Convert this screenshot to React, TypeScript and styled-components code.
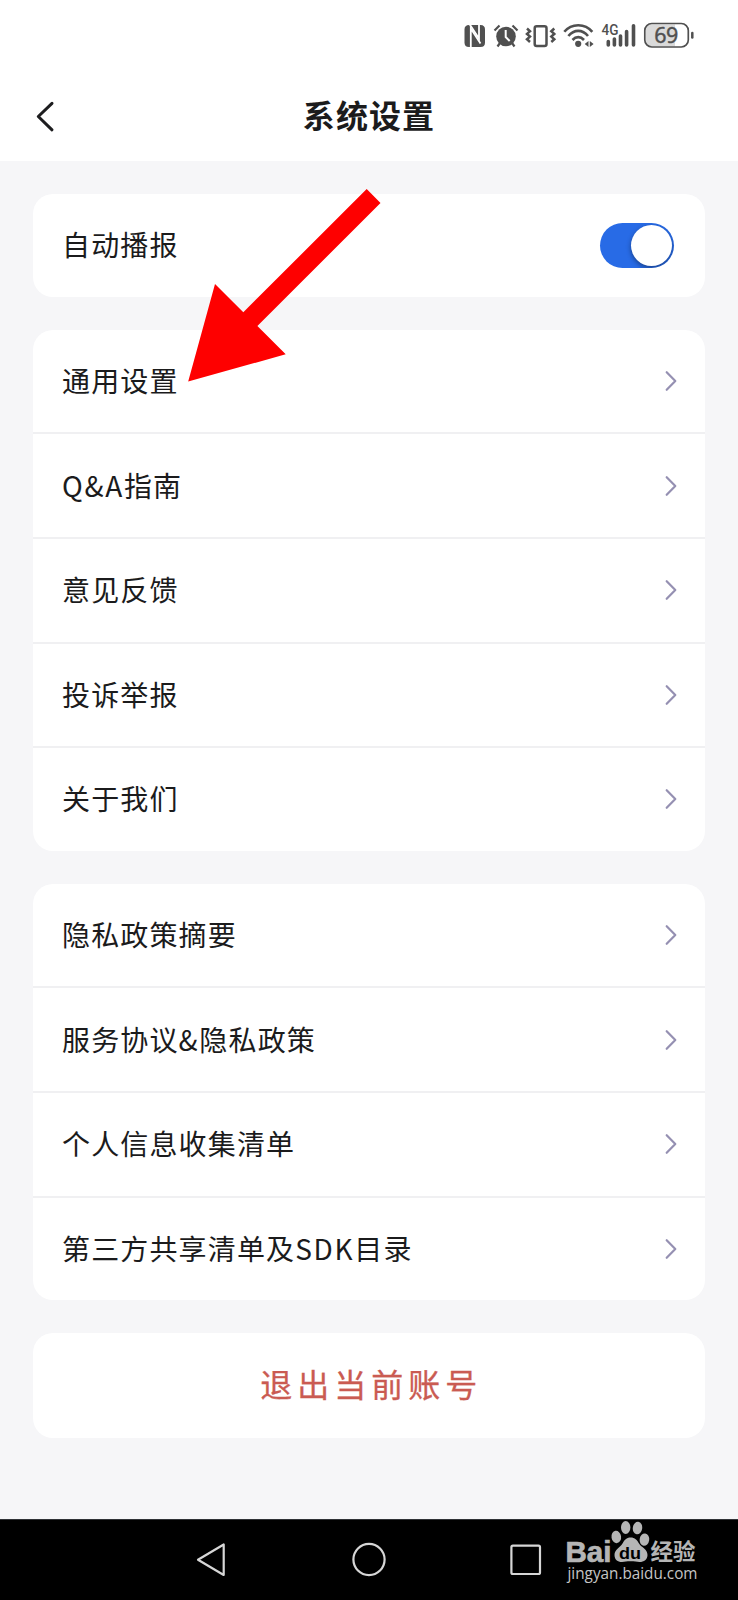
import React from "react";
import styled, { createGlobalStyle } from "styled-components";

const GlobalStyle = createGlobalStyle`
  * { box-sizing: border-box; }
  html, body { margin: 0; padding: 0; background: #f6f6f8; }
`;

const Screen = styled.div`
  position: relative;
  display: flex;
  flex-direction: column;
  width: 738px;
  height: 1600px;
  overflow: hidden;
  background: #f6f6f8;
  color: #1b1b1c;
  font-family: "Noto Sans CJK SC", "Noto Sans", sans-serif;
`;

const Top = styled.header`
  height: 161px;
  flex: none;
  display: flex;
  flex-direction: column;
  background: #fff;
`;

const StatusBar = styled.div`
  height: 72px;
  display: flex;
  justify-content: flex-end;
  padding: 20px 44px 0 0;
`;

const TitleBar = styled.div`
  height: 89px;
  display: grid;
  grid-template-columns: 80px 1fr 80px;
`;

const BackButton = styled.button`
  display: flex;
  align-items: flex-start;
  padding: 27px 0 0 34px;
  border: 0;
  background: none;
`;

const Title = styled.h1`
  margin: 0;
  padding-top: 18px;
  text-align: center;
  font-size: 32px;
  line-height: 48px;
  font-weight: 700;
  letter-spacing: 1.1px;
`;

const Content = styled.main`
  flex: 1;
  display: flex;
  flex-direction: column;
  gap: 32.8px;
  padding: 33px 33px 0 32.5px;
`;

const Card = styled.section`
  background: #fff;
  border-radius: 20px;
`;

const Row = styled.div`
  height: 102.8px;
  display: flex;
  align-items: center;
  justify-content: space-between;
  padding: 0 27.5px 0 29.5px;

  & + & { border-top: 2px solid #f0f0f2; height: 104.6px; }
`;

const Label = styled.span`
  font-size: 28px;
  line-height: 40px;
  letter-spacing: 1.15px;
  white-space: nowrap;
  padding-bottom: 2px;
`;

const Latin = styled.span`
  letter-spacing: 1.7px;
`;

const Switch = styled.span`
  width: 74px;
  height: 45px;
  margin-right: 4px;
  padding: 2px;
  border-radius: 23px;
  background: #286be6;
  display: flex;
  justify-content: flex-end;
  overflow: hidden;
`;

const Knob = styled.span`
  width: 41px;
  height: 41px;
  border-radius: 50%;
  background: #fff;
  box-shadow: 0 2px 5px rgba(0, 0, 0, 0.4);
`;

const Logout = styled.button`
  height: 105px;
  padding: 0 0 5px 5px;
  border: 0;
  border-radius: 20px;
  background: #fff;
  color: #ca5b52;
  font: inherit;
  font-size: 32px;
  letter-spacing: 5px;
  -webkit-text-stroke: 0.3px #ca5b52;
`;

const NavBar = styled.nav`
  position: relative;
  height: 81px;
  flex: none;
  background: #000;
  border-top: 1px solid #303236;
`;

const NavKeys = styled.div`
  display: flex;
  justify-content: space-between;
  padding: 22px 195px 0 195px;
`;

const Watermark = styled.svg`
  position: absolute;
  left: 560px;
  top: 0;
`;

const Pointer = styled.svg`
  position: absolute;
  left: 180px;
  top: 180px;
`;

const StatusIcons = () => (
  <svg width="234" height="32" viewBox="460 20 234 32" fill="#505050">
    <path d="M469 25h11.500q4.500 0 4.500 4.500v13q0 4.500-4.500 4.500H469q-4.500 0-4.500-4.500v-13q0-4.500 4.500-4.500z" />
    <g fill="none" stroke="#fff" strokeWidth="1.800">
      <path d="M470.800 47.500V28.500L480.500 43.500" />
      <path d="M469.800 24.500L479 38.500V25" />
    </g>
    <g>
      <circle cx="506" cy="36.500" r="9.800" />
      <path d="M494.500 30.500l5-5M517.500 30.500l-5-5M500 43l-2.500 3.500M512 43l2.500 3.500" stroke="#505050" strokeWidth="2.200" fill="none" />
      <path d="M505.700 30v7l4 4" fill="none" stroke="#fff" strokeWidth="2" />
    </g>
    <g fill="none" stroke="#505050" strokeWidth="2.500">
      <rect x="534.700" y="26.200" width="11.800" height="19.800" rx="2" />
      <path d="M527 28.500l3 2.700-3 2.700 3 2.700-3 2.700 3 2.700" />
      <path d="M554.300 28.500l-3 2.700 3 2.700-3 2.700 3 2.700-3 2.700" />
    </g>
    <g fill="none" stroke="#505050" strokeWidth="2.600">
      <path d="M564.300 31.800C571.500 23 585 23 592.300 31.800" />
      <path d="M568.400 36C574 29.200 582.500 29.200 588 36" />
      <path d="M572.500 40C576 36.200 580.500 36.200 584 40" />
    </g>
    <circle cx="578.200" cy="43.800" r="3.100" />
    <path d="M588.500 41v6l-3.800-3zM589.800 41v6l3.800-3z" />
    <text x="601.500" y="34.500" fontFamily="Roboto, sans-serif" fontWeight="500" fontSize="15" textLength="17" lengthAdjust="spacingAndGlyphs">4G</text>
    <g stroke="#505050" strokeWidth="3.600" strokeLinecap="round">
      <path d="M608.300 41.500v3.500M614.400 39v6M620.500 36v9M626.600 31.500v13.500M633.500 25.800v19.200" />
    </g>
    <path d="M650 24.500h25v22h-25q-4-1-4-5.500V30q0-4 4-5.500z" fill="#dadada" />
    <rect x="644.800" y="23.500" width="43.500" height="23.500" rx="7" fill="none" stroke="#505050" strokeWidth="1.700" />
    <path d="M692.300 33v4.500" stroke="#505050" strokeWidth="2.500" strokeLinecap="round" />
    <text x="654.200" y="43" fontFamily='"Noto Sans", sans-serif' fontWeight="400" fontSize="21.500" textLength="24" stroke="#505050" strokeWidth=".4">69</text>
  </svg>
);

const BackIcon = () => (
  <svg width="24" height="36" viewBox="34 99 24 36">
    <path d="M52 103.300L38.300 116.500L52 129.800" fill="none" stroke="#1d1d1f" strokeWidth="3" strokeLinecap="round" strokeLinejoin="round" />
  </svg>
);

const Chevron = () => (
  <svg width="14" height="24" viewBox="0 0 14 24" fill="none" stroke="#9590b2" strokeWidth="2.200" strokeLinecap="round" strokeLinejoin="round">
    <path d="M2.700 3.200L11.300 12L2.700 20.800" />
  </svg>
);

const BaiduMark = () => (
  <Watermark width="144" height="80" viewBox="560 1520 144 80" fill="#b5b5b5">
    <text x="565.500" y="1561.500" fontFamily='"Liberation Sans", sans-serif' fontWeight="700" fontSize="29" textLength="46" lengthAdjust="spacingAndGlyphs" stroke="#b5b5b5" strokeWidth=".7">Bai</text>
    <ellipse cx="616.300" cy="1537" rx="4.800" ry="6.200" transform="rotate(-8 616 1537)" />
    <ellipse cx="625.700" cy="1527.500" rx="4.700" ry="6.500" />
    <ellipse cx="637.500" cy="1528" rx="4.700" ry="6.300" transform="rotate(8 637 1528)" />
    <ellipse cx="644.500" cy="1539.500" rx="4.800" ry="6.200" transform="rotate(8 644 1539)" />
    <path d="M630.500 1537.500c4.500 0 6.500 2.500 8.500 6 2.500 4 8.500 5.500 8.500 11.500 0 4.500-3.500 7-8 7-3 0-5-.7-9-.7s-5.500.7-8.500.7c-4.500 0-7.500-2.500-7.500-7 0-5.500 5.500-7.500 8-11.500 2-3.500 4-6 8-6z" />
    <text x="619" y="1558.700" fill="#000" fontFamily='"Liberation Sans", sans-serif' fontWeight="700" fontSize="16" textLength="22" lengthAdjust="spacingAndGlyphs">du</text>
    <text x="650.500" y="1560" fontFamily='"Noto Sans CJK SC", sans-serif' fontWeight="700" fontSize="22.500" textLength="45">经验</text>
    <text x="567.500" y="1579" fill="#c5c5c5" fontFamily='"Open Sans", "Noto Sans", sans-serif' fontSize="16.500" textLength="130" lengthAdjust="spacingAndGlyphs">jingyan.baidu.com</text>
  </Watermark>
);

const groups = [
  ["通用设置", "Q&A指南", "意见反馈", "投诉举报", "关于我们"],
  ["隐私政策摘要", "服务协议&隐私政策", "个人信息收集清单", "第三方共享清单及SDK目录"],
];

/* Latin runs are tracked slightly wider than the Chinese text around them. */
const renderLabel = (text: string) =>
  text.split(/([A-Z&]+)/).map((part, i) => (i % 2 ? <Latin key={i}>{part}</Latin> : part));

export default function App() {
  return (
    <Screen>
      <GlobalStyle />
      <Top>
        <StatusBar><StatusIcons /></StatusBar>
        <TitleBar>
          <BackButton aria-label="返回"><BackIcon /></BackButton>
          <Title>系统设置</Title>
        </TitleBar>
      </Top>
      <Content>
        <Card>
          <Row>
            <Label>自动播报</Label>
            <Switch role="switch" aria-checked="true"><Knob /></Switch>
          </Row>
        </Card>
        {groups.map((items) => (
          <Card key={items[0]}>
            {items.map((item) => (
              <Row key={item}><Label>{renderLabel(item)}</Label><Chevron /></Row>
            ))}
          </Card>
        ))}
        <Logout>退出当前账号</Logout>
      </Content>
      <NavBar>
        <NavKeys>
          <svg width="32" height="36" viewBox="195 1542 32 36" fill="none" stroke="#d6d6d6" strokeWidth="2.200" strokeLinejoin="round">
            <path d="M223.700 1544.500V1575L198 1559.800z" />
          </svg>
          <svg width="36" height="36" viewBox="350 1542 36 36" fill="none" stroke="#d6d6d6" strokeWidth="2.200">
            <circle cx="369" cy="1559.500" r="15.600" />
          </svg>
          <svg width="34" height="36" viewBox="509 1542 34 36" fill="none" stroke="#d6d6d6" strokeWidth="2.200">
            <rect x="511.400" y="1545.700" width="28.600" height="28.300" rx="1.500" />
          </svg>
        </NavKeys>
        <BaiduMark />
      </NavBar>
      <Pointer width="210" height="210" viewBox="180 180 210 210">
        <path d="M366.700 189L380.500 203L257.400 326L285.700 354.300L188.200 381.500L215 284L243.300 312.300z" fill="#fe0000" />
      </Pointer>
    </Screen>
  );
}
